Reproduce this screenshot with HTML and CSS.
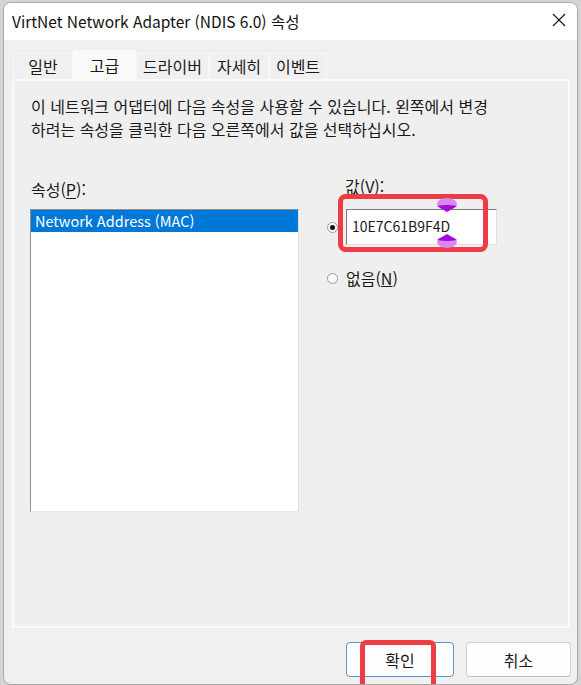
FILE: index.html
```html
<!DOCTYPE html>
<html lang="ko">
<head>
    <meta charset="UTF-8">
    <title>VirtNet Network Adapter (NDIS 6.0) 속성</title>
    <link rel="stylesheet" href="styles.css">
</head>
<body>
    <div class="window">
        <div class="titlebar">
            <span class="title">VirtNet Network Adapter (NDIS 6.0) 속성</span>
            <svg class="close" width="14" height="14" viewBox="0 0 14 14">
                <path d="M1 1 L13 13 M13 1 L1 13" stroke="#1a1a1a" stroke-width="1.2" fill="none"/>
            </svg>
        </div>

        <div class="content">
            <div class="tabs">
                <div class="tab w-general">일반</div>
                <div class="tab active">고급</div>
                <div class="tab w-driver">드라이버</div>
                <div class="tab w-detail">자세히</div>
                <div class="tab w-event">이벤트</div>
            </div>

            <div class="panel">
                <p class="desc">이 네트워크 어댑터에 다음 속성을 사용할 수 있습니다. 왼쪽에서 변경<br>하려는 속성을 클릭한 다음 오른쪽에서 값을 선택하십시오.</p>

                <div class="props">
                    <div class="col-left">
                        <div class="label">속성(<u>P</u>):</div>
                        <div class="listbox">
                            <div class="item selected">Network Address (MAC)</div>
                        </div>
                    </div>

                    <div class="col-right">
                        <div class="label value-label">값(<u>V</u>):</div>
                        <div class="row">
                            <span class="radio checked"></span>
                            <div class="edit">10E7C61B9F4D</div>
                        </div>
                        <div class="row none-row">
                            <span class="radio"></span>
                            <span>없음(<u>N</u>)</span>
                        </div>

                        <!-- annotation drawn on top of the screenshot -->
                        <svg class="mark" width="170" height="80" viewBox="0 0 170 80">
                            <rect x="13.5" y="17.5" width="145" height="53" rx="5" fill="none" stroke="#ef3b44" stroke-width="5"/>
                            <ellipse cx="120" cy="25" rx="10" ry="6" fill="#d98af2"/>
                            <path d="M110 27 Q120 25 130 27 L120 33 Z" fill="#a808d8"/>
                            <ellipse cx="120" cy="63" rx="10" ry="6" fill="#d98af2"/>
                            <path d="M110 61 Q120 63 130 61 L120 55 Z" fill="#a808d8"/>
                        </svg>
                    </div>
                </div>
            </div>

            <div class="buttons">
                <button class="btn default">확인</button>
                <button class="btn cancel">취소</button>
                <div class="ok-mark"></div>
            </div>
        </div>
    </div>
</body>
</html>
```

FILE: styles.css
```css
html {
    background-color: #d4d4d4;
}
body {
    margin: 0;
    font-family: "Noto Sans CJK KR", "Noto Sans", sans-serif;
    font-size: 16px;
    color: #1a1a1a;
    overflow: hidden;
}
.window {
    margin: 2px 0 0 3px;
    width: 573px;
    height: 681px;
    border: 1px solid #a8a8a8;
    border-radius: 8px;
    background-color: #f0f0f0;
    overflow: hidden;
}
.titlebar {
    height: 37px;
    background-color: #ffffff;
    display: flex;
    align-items: center;
    justify-content: space-between;
    padding: 0 8px 0 8px;
}
.title {
    font-size: 15.5px;
    color: #111;
    margin-top: -2px;
}
.close {
    margin-right: 3px;
    margin-top: -4px;
}

.tabs {
    display: flex;
    align-items: flex-end;
    height: 29px;
    padding: 10px 0 0 9px;
    position: relative;
    z-index: 1;
}
.tab {
    height: 26px;
    line-height: 24px;
    text-align: center;
    background-color: #f0f0f0;
    border: 1px solid #f7f7f7;
    border-bottom: none;
    box-sizing: border-box;
}
.w-general { width: 60px; }
.w-driver { width: 73px; }
.w-detail { width: 60px; }
.w-event { width: 58px; }
.tab.active {
    width: 63px;
    height: 31px;
    line-height: 28px;
    margin-bottom: -2px;
    background-color: #f9f9f9;
    border-color: #f9f9f9;
}

.panel {
    margin: 0 7px 0 8px;
    height: 549px;
    box-sizing: border-box;
    border: 2px solid #f9f9f9;
    background-color: #efefef;
}
.desc {
    margin: 0;
    padding: 14px 0 0 17px;
    line-height: 23px;
}
.props {
    display: flex;
    margin-top: 38px;
    padding-left: 16px;
}
.label {
    height: 20px;
    line-height: 20px;
    padding-left: 1px;
    margin-bottom: 10px;
}
.label u {
    text-underline-offset: 2px;
}
.listbox {
    width: 269px;
    height: 303px;
    box-sizing: border-box;
    background-color: #ffffff;
    border: 1px solid;
    border-color: #8f8f8f #e2e2e2 #e8e8e8 #8f8f8f;
}
.item {
    height: 22px;
    line-height: 21px;
    padding-left: 4px;
    font-size: 14.5px;
}
.item.selected {
    background-color: #0078d7;
    color: #ffffff;
}

.col-right {
    position: relative;
    margin-left: 28px;
}
.value-label {
    padding-left: 18px;
    margin-top: -3px;
    margin-bottom: 13px;
}
.row {
    display: flex;
    align-items: center;
}
.radio {
    width: 11px;
    height: 11px;
    box-sizing: border-box;
    border-radius: 50%;
    border: 1px solid #9a9a9a;
    background-color: #fbfbfb;
    margin-right: 8px;
    position: relative;
}
.radio.checked::after {
    content: "";
    position: absolute;
    left: 2px;
    top: 2px;
    width: 5px;
    height: 5px;
    border-radius: 50%;
    background-color: #111;
}
.edit {
    width: 151px;
    height: 36px;
    box-sizing: border-box;
    background-color: #ffffff;
    border: 1px solid;
    border-color: #7c7c7c #e2e2e2 #e2e2e2 #7c7c7c;
    line-height: 33px;
    padding-left: 5px;
    font-size: 14px;
}
.none-row {
    margin-top: 21px;
}
.mark {
    position: absolute;
    left: 0;
    top: 0;
}

.buttons {
    display: flex;
    justify-content: flex-end;
    gap: 12px;
    margin-top: 14px;
    padding-right: 6px;
    position: relative;
}
.btn {
    height: 35px;
    font-family: inherit;
    font-size: 16px;
    color: #1a1a1a;
    background-color: #fdfdfd;
    border: 1px solid #d0d0d0;
    border-bottom-color: #bdbdbd;
    border-radius: 4px;
}
.btn.default {
    width: 108px;
    border-color: #5c93cf;
}
.btn.cancel {
    width: 105px;
}
.ok-mark {
    position: absolute;
    left: 356px;
    top: -2px;
    width: 66px;
    height: 48px;
    border: 5px solid #ef3b44;
    border-radius: 6px;
}
```
